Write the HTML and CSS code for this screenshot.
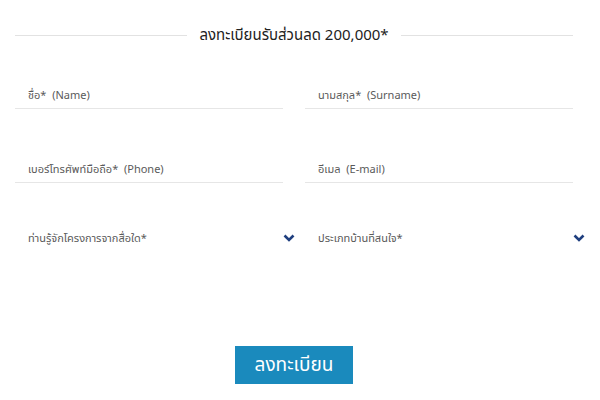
FILE: index.html
```html
<!DOCTYPE html>
<html>
<head>
  <title>ลงทะเบียน</title>
  <link rel="stylesheet" href="styles.css">
</head>
<body>
  <div class="form-wrap">
    <div class="heading">
      <span class="line"></span>
      <h2>ลงทะเบียนรับส่วนลด 200,000*</h2>
      <span class="line"></span>
    </div>

    <form class="grid">
      <div class="field"><span class="label">ชื่อ*&nbsp; (Name)</span></div>
      <div class="field"><span class="label">นามสกุล*&nbsp; (Surname)</span></div>
      <div class="field"><span class="label">เบอร์โทรศัพท์มือถือ*&nbsp; (Phone)</span></div>
      <div class="field"><span class="label">อีเมล&nbsp; (E-mail)</span></div>
      <div class="field select">
        <span class="label">ท่านรู้จักโครงการจากสื่อใด*</span>
        <svg class="chev" width="12" height="8" viewBox="0 0 12 8"><path d="M1.5 1.5 L6 6 L10.5 1.5" fill="none" stroke="#1f3f7f" stroke-width="2.6"/></svg>
      </div>
      <div class="field select">
        <span class="label">ประเภทบ้านที่สนใจ*</span>
        <svg class="chev" width="12" height="8" viewBox="0 0 12 8"><path d="M1.5 1.5 L6 6 L10.5 1.5" fill="none" stroke="#1f3f7f" stroke-width="2.6"/></svg>
      </div>
    </form>

    <div class="actions">
      <button type="button">ลงทะเบียน</button>
    </div>
  </div>
</body>
</html>
```

FILE: styles.css
```css
body {
  margin: 0;
  background: #ffffff;
  font-family: "Noto Sans", "Noto Sans Thai", "DejaVu Sans", sans-serif;
}

.form-wrap {
  padding: 24px 27px 0 15px;
}

.heading {
  display: flex;
  align-items: center;
  gap: 12px;
  height: 22px;
}

.heading .line {
  flex: 1;
  height: 1px;
  background: #e2e2e2;
}

.heading h2 {
  margin: 0;
  font-size: 15px;
  font-weight: normal;
  color: #222222;
}

.grid {
  display: grid;
  grid-template-columns: 268px 268px;
  column-gap: 22px;
  row-gap: 47px;
  margin-top: 36px;
}

.field {
  height: 26px;
  display: flex;
  align-items: center;
  padding-left: 13px;
  border-bottom: 1px solid #e6e6e6;
}

.field .label {
  font-size: 11px;
  color: #5a5a5a;
}

.field.select {
  border-bottom: none;
  justify-content: space-between;
  margin-top: -5px;
}

.field.select .chev {
  margin-right: -12px;
}

.actions {
  display: flex;
  justify-content: center;
  margin-top: 95px;
}

button {
  background: #1a8abd;
  color: #ffffff;
  border: none;
  width: 118px;
  height: 38px;
  font-family: inherit;
  font-size: 19px;
  cursor: pointer;
}
```
